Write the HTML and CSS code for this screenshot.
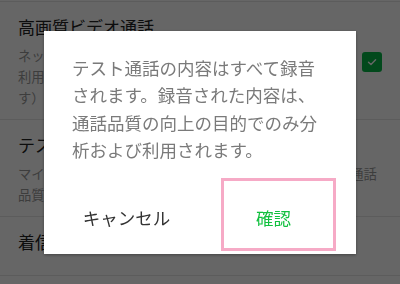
FILE: index.html
```html
<!DOCTYPE html>
<html lang="ja">
<head>
<meta charset="utf-8">
<title>テスト通話</title>
<link rel="stylesheet" href="styles.css">
</head>
<body>
<div class="page">
  <div class="item">
    <div class="item-text">
      <div class="item-title">高画質ビデオ通話</div>
      <div class="item-desc">ネットワーク環境が良好な場合、高画質で<br>利用できます（データ通信量が多くなりま<br>す）</div>
    </div>
    <span class="check">
      <svg viewBox="0 0 20 20" width="20" height="20"><path d="M6.5 10.2 L9 12.6 L13.6 7.8" fill="none" stroke="#fff" stroke-width="1.4" stroke-linecap="round" stroke-linejoin="round"/></svg>
    </span>
  </div>
  <div class="item">
    <div class="item-text">
      <div class="item-title">テスト通話</div>
      <div class="item-desc">マイクとスピーカーが正常に動作するか確認するテスト通話<br>品質を確認できます。</div>
    </div>
  </div>
  <div class="item item-last">
    <div class="item-text">
      <div class="item-title">着信音とバイブレーション</div>
    </div>
  </div>
</div>
<div class="overlay">
  <div class="dialog">
    <p class="message">テスト通話の内容はすべて録音されます。録音された内容は、通話品質の向上の目的でのみ分析および利用されます。</p>
    <div class="actions">
      <button class="btn">キャンセル</button>
      <button class="btn btn-primary">確認</button>
    </div>
  </div>
</div>
</body>
</html>
```

FILE: styles.css
```css
html, body {
  margin: 0;
  padding: 0;
}
body {
  width: 400px;
  height: 284px;
  overflow: hidden;
  background: #fff;
  font-family: "Noto Sans CJK JP", "Noto Sans", sans-serif;
}
.page {
  border-top: 1px solid #e6e6e6;
  margin-top: 1px;
}
.item {
  display: flex;
  align-items: center;
  padding: 13px 18px 11px 18px;
  border-bottom: 1px solid #e6e6e6;
}
.item-last {
  padding-bottom: 21px;
}
.item-text {
  flex: 1;
  min-width: 0;
}
.item-title {
  font-size: 17px;
  line-height: 24px;
  color: #222;
  white-space: nowrap;
}
.item-desc {
  margin-top: 6px;
  font-size: 13.3px;
  line-height: 21px;
  color: #999;
  white-space: nowrap;
}
.check {
  width: 20px;
  height: 20px;
  border-radius: 3px;
  background: #06b747;
  display: flex;
}
.overlay {
  position: fixed;
  inset: 0;
  background: rgba(0, 0, 0, 0.6);
  display: flex;
  align-items: center;
  justify-content: center;
}
.dialog {
  width: 312px;
  height: 223px;
  background: #fff;
  box-shadow: 0 1px 3px rgba(0, 0, 0, 0.35);
  display: flex;
  flex-direction: column;
  box-sizing: border-box;
}
.message {
  margin: 0;
  padding: 23px 28px 0 28px;
  font-size: 17.5px;
  line-height: 27.5px;
  color: #7a7a7a;
}
.actions {
  margin-top: auto;
  display: flex;
  justify-content: flex-end;
  gap: 32px;
  padding: 0 20px 3px 0;
}
.btn {
  width: 115px;
  height: 73px;
  box-sizing: border-box;
  border: 3px solid transparent;
  background: transparent;
  padding: 6px 10px 0 0;
  margin: 0;
  display: flex;
  align-items: center;
  justify-content: center;
  font-family: "Noto Sans CJK JP", "Noto Sans", sans-serif;
  font-size: 17.5px;
  color: #333;
}
.btn-primary {
  border-color: #f6aac6;
  color: #12c03f;
}
```
